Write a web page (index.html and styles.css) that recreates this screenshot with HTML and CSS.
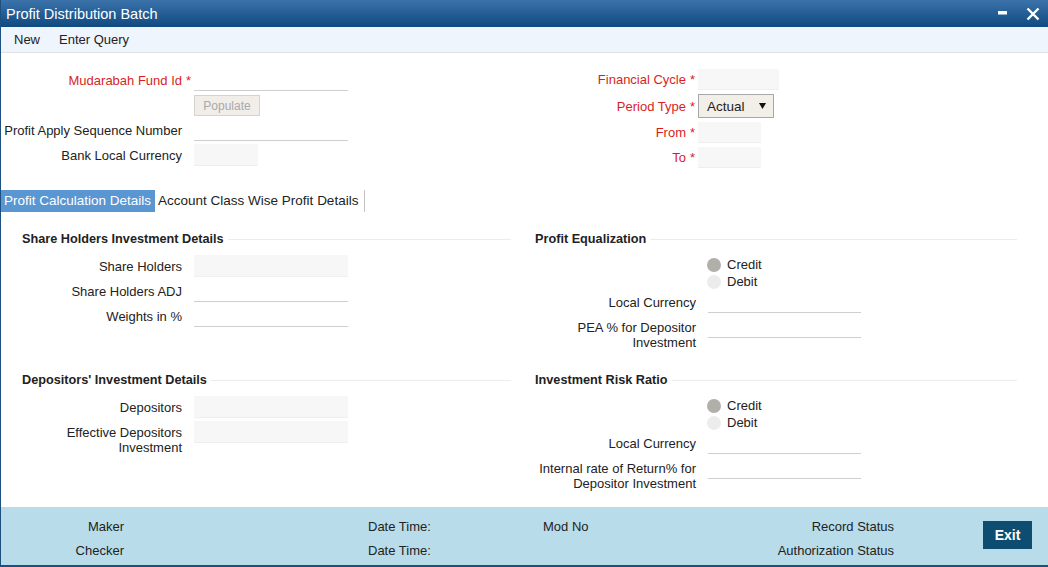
FILE: index.html
```html
<!DOCTYPE html>
<html lang="en">
<head>
    <meta charset="UTF-8">
    <title>Profit Distribution Batch</title>
    <link rel="stylesheet" href="styles.css">
</head>
<body>
    <div class="window">
        <div class="titlebar">
            <span class="title">Profit Distribution Batch</span>
            <div class="win-btns">
                <svg class="win-icon" width="12" height="14" viewBox="0 0 12 14"><rect x="1" y="4" width="9" height="3.5" fill="#fff"/></svg>
                <svg class="win-icon" width="14" height="14" viewBox="0 0 14 14"><path d="M1.5 1.5 L12.5 12.5 M12.5 1.5 L1.5 12.5" stroke="#fff" stroke-width="2.4"/></svg>
            </div>
        </div>

        <div class="toolbar">
            <span class="tool">New</span>
            <span class="tool">Enter Query</span>
        </div>

        <div class="head">
            <div class="head-left">
                <div class="row">
                    <label class="lbl req">Mudarabah Fund Id</label><span class="star">*</span>
                    <input class="txt w154" type="text">
                </div>
                <div class="row">
                    <span class="lbl"></span><span class="star"></span>
                    <button class="btn-populate">Populate</button>
                </div>
                <div class="row">
                    <label class="lbl">Profit Apply Sequence Number</label><span class="star"></span>
                    <input class="txt w154" type="text">
                </div>
                <div class="row">
                    <label class="lbl">Bank Local Currency</label><span class="star"></span>
                    <input class="txt ro w64" type="text" readonly>
                </div>
            </div>
            <div class="head-right">
                <div class="row r21">
                    <label class="lbl req">Financial Cycle</label><span class="star">*</span>
                    <input class="txt ro w81" type="text" readonly>
                </div>
                <div class="row r24">
                    <label class="lbl req">Period Type</label><span class="star">*</span>
                    <div class="select">
                        <span>Actual</span>
                        <svg width="7" height="6" viewBox="0 0 7 6"><path d="M0 0 H7 L3.5 6 Z" fill="#111"/></svg>
                    </div>
                </div>
                <div class="row r21">
                    <label class="lbl req">From</label><span class="star">*</span>
                    <input class="txt ro w63" type="text" readonly>
                </div>
                <div class="row r21">
                    <label class="lbl req">To</label><span class="star">*</span>
                    <input class="txt ro w63" type="text" readonly>
                </div>
            </div>
        </div>

        <div class="tabs">
            <div class="tab active">Profit Calculation Details</div>
            <div class="tab">Account Class Wise Profit Details</div>
        </div>

        <div class="panel">
            <div class="sec sec-left">
                <div class="sec-title">Share Holders Investment Details</div>
                <div class="row">
                    <label class="lbl">Share Holders</label>
                    <input class="txt ro w154" type="text" readonly>
                </div>
                <div class="row">
                    <label class="lbl">Share Holders ADJ</label>
                    <input class="txt w154" type="text">
                </div>
                <div class="row">
                    <label class="lbl">Weights in %</label>
                    <input class="txt w154" type="text">
                </div>
            </div>

            <div class="sec sec-right">
                <div class="sec-title">Profit Equalization</div>
                <div class="radios">
                    <div class="radio"><span class="dot on"></span>Credit</div>
                    <div class="radio"><span class="dot"></span>Debit</div>
                </div>
                <div class="row gap1">
                    <label class="lbl">Local Currency</label>
                    <input class="txt w153" type="text">
                </div>
                <div class="row tall">
                    <label class="lbl">PEA % for Depositor Investment</label>
                    <input class="txt w153" type="text">
                </div>
            </div>

            <div class="sec sec-left">
                <div class="sec-title">Depositors' Investment Details</div>
                <div class="row">
                    <label class="lbl">Depositors</label>
                    <input class="txt ro w154" type="text" readonly>
                </div>
                <div class="row tall">
                    <label class="lbl">Effective Depositors Investment</label>
                    <input class="txt ro w154" type="text" readonly>
                </div>
            </div>

            <div class="sec sec-right">
                <div class="sec-title">Investment Risk Ratio</div>
                <div class="radios">
                    <div class="radio"><span class="dot on"></span>Credit</div>
                    <div class="radio"><span class="dot"></span>Debit</div>
                </div>
                <div class="row gap1">
                    <label class="lbl">Local Currency</label>
                    <input class="txt w153" type="text">
                </div>
                <div class="row tall">
                    <label class="lbl">Internal rate of Return% for Depositor Investment</label>
                    <input class="txt w153" type="text">
                </div>
            </div>
        </div>

        <div class="footer">
            <div class="audit">
                <span class="right">Maker</span><span></span><span>Date Time:</span><span>Mod No</span><span class="right">Record Status</span>
                <span class="right">Checker</span><span></span><span>Date Time:</span><span></span><span class="right">Authorization Status</span>
            </div>
            <button class="btn-exit">Exit</button>
        </div>
    </div>
</body>
</html>
```

FILE: styles.css
```css
* {
    margin: 0;
    padding: 0;
    box-sizing: border-box;
}

body {
    font-family: "Liberation Sans", Arial, sans-serif;
    font-size: 13px;
    color: #222;
    background: #fff;
}

.window {
    height: 100vh;
    display: flex;
    flex-direction: column;
    border-left: 1px solid #1d4f80;
    border-bottom: 2px solid #1d4f80;
}

.titlebar {
    height: 27px;
    display: flex;
    align-items: center;
    justify-content: space-between;
    padding: 0 8px 0 5px;
    background: linear-gradient(#3b72aa, #0f4a80);
    color: #fff;
}

.title {
    font-size: 14.5px;
}

.win-btns {
    display: flex;
    align-items: center;
    gap: 17px;
}

.win-icon {
    display: block;
}

.toolbar {
    height: 26px;
    display: flex;
    align-items: center;
    gap: 19px;
    padding-left: 13px;
    background: #eef5fd;
    border-bottom: 1px solid #dfe3e8;
}

/* form header */
.head {
    display: grid;
    grid-template-columns: 520px 1fr;
    padding: 16px 0 22px;
}

.row {
    display: flex;
    align-items: center;
    height: 22px;
    margin-bottom: 3px;
}

.row:last-child {
    margin-bottom: 0;
}

.lbl {
    text-align: right;
    line-height: 15px;
}

.head-left .lbl {
    width: 181px;
}

.head-right .lbl {
    width: 165px;
}

.head-right .row {
    margin-bottom: 4px;
}

.head-right .row:last-child {
    margin-bottom: 0;
}

.row.r21 { height: 21px; }
.row.r24 { height: 24px; }

.req {
    color: #d81e1e;
}

.star {
    width: 12px;
    padding-left: 4px;
    color: #d81e1e;
}

.txt {
    height: 100%;
    border: none;
    border-bottom: 1px solid #cfcfcf;
    background: #fff;
    font: inherit;
    outline: none;
}

.txt.ro {
    background: #f7f7f7;
    border-bottom-color: #efefef;
}

.w154 { width: 154px; }
.w153 { width: 153px; }
.w81 { width: 81px; }
.w64 { width: 64px; }
.w63 { width: 63px; }

.btn-populate {
    width: 66px;
    height: 21px;
    margin-top: 1px;
    background: #f1eee9;
    border: 1px solid #d6d2cc;
    color: #a9a9a9;
    font-family: inherit;
    font-size: 12px;
}

.select {
    width: 76px;
    height: 24px;
    display: flex;
    align-items: center;
    justify-content: space-between;
    padding: 0 7px 0 8px;
    background: #f2eee8;
    border: 1px solid #a8a8a8;
    font-size: 13.5px;
}

/* tabs */
.tabs {
    display: flex;
    height: 22px;
    font-size: 13.5px;
}

.tab {
    padding: 0 4px 0 3px;
    line-height: 22px;
}

.tab.active {
    background: #5a96d1;
    color: #fff;
}

.tab:last-child {
    padding-right: 6px;
    border-right: 1px solid #c4c4c4;
}

/* tab panel */
.panel {
    display: grid;
    grid-template-columns: 520px 1fr;
    grid-template-rows: 119px auto;
    row-gap: 22px;
    padding-top: 19px;
}

.sec-title {
    display: flex;
    align-items: center;
    height: 16px;
    font-weight: bold;
    font-size: 12.7px;
}

.sec-title::after {
    content: "";
    flex: 1;
    height: 1px;
    margin-left: 4px;
    background: #ececec;
}

.sec-left .sec-title {
    padding: 0 10px 0 21px;
    margin-bottom: 8px;
}

.sec-left .lbl {
    width: 181px;
    margin-right: 12px;
}

.sec-right .sec-title {
    margin: 0 31px 9px 14px;
}

.sec-right .lbl {
    width: 175px;
    margin-right: 12px;
}

.row.tall {
    align-items: flex-start;
}

.row.tall .lbl {
    padding-top: 4px;
}

.row.gap1 {
    margin-top: 1px;
}

.radios {
    padding-left: 186px;
}

.radio {
    display: flex;
    align-items: center;
    gap: 6px;
    height: 17px;
}

.dot {
    width: 14px;
    height: 14px;
    border-radius: 50%;
    background: #ececec;
}

.dot.on {
    background: #b1afaa;
}

/* audit footer */
.footer {
    margin-top: auto;
    height: 58px;
    display: flex;
    align-items: flex-start;
    background: #b8dcea;
}

.audit {
    display: grid;
    grid-template-columns: 123px 244px 175px 120px 231px;
    row-gap: 8px;
    padding-top: 12px;
    line-height: 16px;
}

.audit .right {
    text-align: right;
}

.btn-exit {
    margin: 14px 16px 0 auto;
    width: 49px;
    height: 28px;
    border: none;
    background: #0d4d71;
    color: #fff;
    font-family: inherit;
    font-size: 14px;
    font-weight: bold;
}
```
